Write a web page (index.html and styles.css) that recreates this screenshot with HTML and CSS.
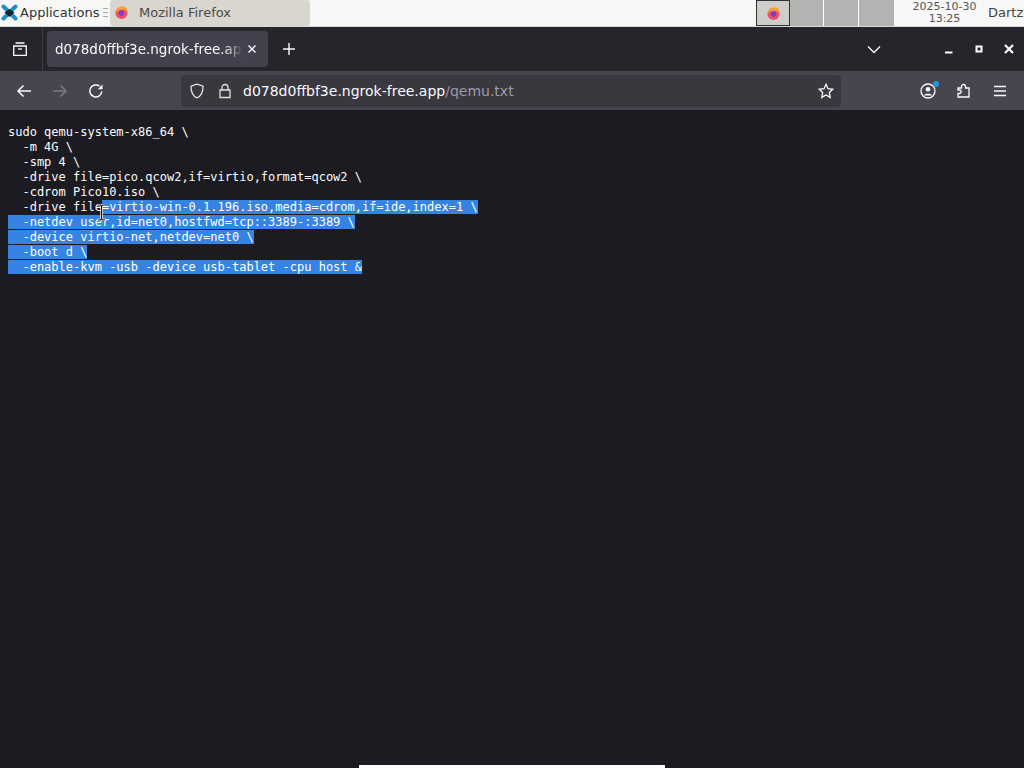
FILE: index.html
```html
<!DOCTYPE html>
<html lang="en">
<head>
<meta charset="utf-8">
<title>qemu.txt</title>
<link rel="stylesheet" href="styles.css">
</head>
<body>
<header class="panel">
  <div class="apps">
    <svg class="apps-icon" width="17" height="17" viewBox="0 0 17 17"><path d="M2.500 2.500l12 12M14.500 2.500l-12 12" stroke="#1f8fc4" stroke-width="4" stroke-linecap="round"/><path d="M3.500 8.500L8.500 5l5 3.500-5 4.500z" fill="#10202c"/></svg>
    <span class="apps-label">Applications</span>
    <svg class="sep" width="6" height="11" viewBox="0 0 6 11" stroke="#a8a8a4"><path d="M0 1.500h5M0 5.500h5M0 9.500h5"/></svg>
  </div>
  <div class="task">
    <svg class="fx" width="15" height="15" viewBox="0 0 16 16"><circle cx="8" cy="8.500" r="6.500" fill="#ee4f6b"/><path d="M1.700 7.500C2.500 3 6.500 1 10.500 1.800c3 .7 4.600 3.700 4 7.200-1-3-3-4-5-4-3 0-5 1-7.800 2.500z" fill="#fa9a36"/><circle cx="8" cy="8.500" r="3" fill="#7a3fc4"/></svg>
    <span>Mozilla Firefox</span>
  </div>
  <div class="spacer"></div>
  <div class="pager">
    <div class="desk active"><svg width="15" height="15" viewBox="0 0 16 16"><circle cx="8" cy="8.500" r="6.500" fill="#ee4f6b"/><path d="M1.700 7.500C2.500 3 6.500 1 10.500 1.800c3 .7 4.600 3.700 4 7.200-1-3-3-4-5-4-3 0-5 1-7.800 2.500z" fill="#fa9a36"/><circle cx="8" cy="8.500" r="3" fill="#7a3fc4"/></svg></div>
    <div class="desk"></div>
    <div class="desk"></div>
    <div class="desk"></div>
  </div>
  <div class="clock"><span>2025-10-30</span><span>13:25</span></div>
  <div class="user">Dartz</div>
</header>

<div class="tabbar">
  <button class="tb-btn view"><svg width="16" height="16" viewBox="0 0 16 16" fill="none" stroke="#fbfbfe" stroke-width="1.300"><path d="M3.500 2h9M1.700 5h12.600v9.300H1.700z"/><path d="M6 8h4"/></svg></button>
  <div class="tab">
    <span class="tab-title">d078d0ffbf3e.ngrok-free.app/qemu.txt</span>
    <svg class="tab-x" width="10" height="10" viewBox="0 0 10 10" stroke="#fbfbfe" stroke-width="1.400"><path d="M1.500 1.500l7 7M8.500 1.500l-7 7"/></svg>
  </div>
  <button class="tb-btn plus"><svg width="14" height="14" viewBox="0 0 14 14" stroke="#fbfbfe" stroke-width="1.400"><path d="M7 1v12M1 7h12"/></svg></button>
  <div class="spacer"></div>
  <svg class="chev" width="14" height="9" viewBox="0 0 14 9" fill="none" stroke="#fbfbfe" stroke-width="1.300"><path d="M1 1.500l6 6 6-6"/></svg>
  <div class="winctl">
    <svg width="10" height="10" viewBox="0 0 10 10"><path d="M1 7.500h7.500v2H1z" fill="#fff"/></svg>
    <svg width="10" height="10" viewBox="0 0 10 10" fill="none" stroke="#fff" stroke-width="2"><path d="M2.500 2.500h5v5h-5z"/></svg>
    <svg width="10" height="10" viewBox="0 0 10 10" stroke="#fff" stroke-width="2.200"><path d="M1 1l8 8M9 1l-8 8"/></svg>
  </div>
</div>

<nav class="navbar">
  <svg class="nav-icon" width="16" height="16" viewBox="0 0 16 16" fill="none" stroke="#fbfbfe" stroke-width="1.500"><path d="M15 8H2M7.500 2.500L2 8l5.500 5.500"/></svg>
  <svg class="nav-icon" width="16" height="16" viewBox="0 0 16 16" fill="none" stroke="#7b7a83" stroke-width="1.500"><path d="M1 8h13M8.500 2.500L14 8l-5.500 5.500"/></svg>
  <svg class="nav-icon" width="16" height="16" viewBox="0 0 16 16" fill="none" stroke="#fbfbfe" stroke-width="1.500"><path d="M13.800 8.500A6 6 0 1 1 11.500 3.200"/><path d="M14.500 1.500v4.700H9.800z" fill="#fbfbfe" stroke="none"/></svg>
  <div class="urlbar">
    <svg class="shield" width="16" height="16" viewBox="0 0 16 16" fill="none" stroke="#e0e0e6" stroke-width="1.300"><path d="M8 1.200l6 2c0 6-1.500 9.800-6 11.600C3.500 13 2 9.200 2 3.200z"/></svg>
    <svg class="lock" width="16" height="16" viewBox="0 0 16 16" fill="none" stroke="#e0e0e6" stroke-width="1.300"><path d="M3 7h10v7.500H3zM5 7V4.500a3 3 0 0 1 6 0V7"/></svg>
    <span class="url"><span class="host">d078d0ffbf3e.ngrok-free.app</span><span class="path">/qemu.txt</span></span>
    <div class="spacer"></div>
    <svg class="star" width="16" height="16" viewBox="0 0 16 16" fill="none" stroke="#fbfbfe" stroke-width="1.300"><path d="M8 1.300l2 4.400 4.800.6-3.500 3.300.9 4.800L8 12l-4.200 2.400.9-4.800L1.200 6.300 6 5.700z"/></svg>
  </div>
  <div class="nav-right">
    <div class="account">
      <svg width="16" height="16" viewBox="0 0 16 16" fill="none" stroke="#fbfbfe" stroke-width="1.300"><circle cx="8" cy="8" r="7"/><circle cx="8" cy="6.200" r="2.300" fill="#fbfbfe" stroke="none"/><path d="M3.800 12.500c1-2.200 7.400-2.200 8.400 0z" fill="#fbfbfe" stroke="none"/></svg>
      <span class="badge"></span>
    </div>
    <svg width="16" height="16" viewBox="0 0 16 16" fill="none" stroke="#fbfbfe" stroke-width="1.300"><path d="M2 5h3.500V3.500a2 2 0 0 1 4 0V5H13v9H2v-3.500h1.500a1.700 1.700 0 0 0 0-3.500H2z"/></svg>
    <svg width="16" height="16" viewBox="0 0 16 16" stroke="#fbfbfe" stroke-width="1.300"><path d="M2 3.500h12M2 8h12M2 12.500h12"/></svg>
  </div>
</nav>

<main class="content">
<pre class="doc">sudo qemu-system-x86_64 \
  -m 4G \
  -smp 4 \
  -drive file=pico.qcow2,if=virtio,format=qcow2 \
  -cdrom Pico10.iso \
  -drive file<mark>=virtio-win-0.1.196.iso,media=cdrom,if=ide,index=1 \
</mark><mark>  -netdev user,id=net0,hostfwd=tcp::3389-:3389 \
</mark><mark>  -device virtio-net,netdev=net0 \
</mark><mark>  -boot d \
</mark><mark>  -enable-kvm -usb -device usb-tablet -cpu host &amp;</mark></pre>
  <svg class="cursor" width="9" height="17" viewBox="0 0 9 17" fill="none"><path d="M1 1h2.500l1 1 1-1H8M4.500 2v13M1 16h2.500l1-1 1 1H8" stroke="#fff" stroke-width="2.600"/><path d="M1 1h2.500l1 1 1-1H8M4.500 2v13M1 16h2.500l1-1 1 1H8" stroke="#111" stroke-width="1.200"/></svg>
  <div class="scrollbar"></div>
</main>
</body>
</html>
```
FILE: styles.css
```css
html, body { margin: 0; padding: 0; height: 100%; overflow: hidden; }
body {
  width: 1024px; height: 768px;
  display: flex; flex-direction: column;
  font-family: "DejaVu Sans", sans-serif;
  background: #1c1b22;
}
button { background: none; border: 0; padding: 0; display: flex; }
svg { display: block; flex: none; }
.spacer { flex: 1; }

.panel {
  height: 27px; box-sizing: border-box; background: #f7f7f6; color: #2e3436;
  display: flex; align-items: stretch; font-size: 13px;
  border-bottom: 1px solid #d8d8d4;
  flex: none;
}
.apps { width: 110px; height: 25px; display: flex; align-items: center; gap: 2px; padding-left: 1px; box-sizing: border-box; white-space: nowrap; }
.sep { margin-left: 2px; }
.task {
  width: 200px; height: 26px; box-sizing: border-box;
  background: #d9d6cf; border-radius: 3px;
  display: flex; align-items: center; gap: 10px;
  padding: 0 0 2px 4px; color: #4a4a48; font-size: 13px;
}
.pager { display: grid; grid-template-columns: 34px 34px 35px 35px; height: 26px; flex: none; }
.desk { background: #b3b3b1; border-right: 1px solid #fff; box-sizing: border-box; display: flex; align-items: center; justify-content: center; }
.desk.active { background: #cfcdc9; border: 1px solid #2e3436; }
.desk:last-child { border-right: 0; }
.clock { width: 94px; box-sizing: border-box; flex: none; padding: 1px 0 0 7px; display: flex; flex-direction: column; align-items: center; font-size: 11px; line-height: 12px; color: #555; }
.user { width: 36px; flex: none; font-size: 13px; line-height: 25px; white-space: nowrap; color: #444; }

.tabbar {
  height: 44px; background: #26252c; flex: none;
  display: flex; align-items: center;
}
.tb-btn.view { width: 43px; height: 44px; justify-content: center; align-items: center; padding-right: 3px; border-right: 1px solid #3c3b44; box-sizing: border-box; margin-right: 4px; }
.tab {
  width: 221px; height: 36px; background: #42414d; border-radius: 4px;
  display: flex; align-items: center; box-sizing: border-box; padding: 0 11px 0 8px;
  color: #fbfbfe; font-size: 13.500px; gap: 4px;
}
.tab-title { flex: 1; overflow: hidden; white-space: nowrap; -webkit-mask-image: linear-gradient(to right, #000 90%, transparent); mask-image: linear-gradient(to right, #000 90%, transparent); }
.tb-btn.plus { margin-left: 14px; }
.chev { margin-right: 63px; }
.winctl { display: flex; gap: 20px; margin-right: 10px; }

.navbar {
  height: 40px; background: #47464f; flex: none; box-sizing: border-box;
  display: flex; align-items: center; padding-left: 16px;
  border-bottom: 1px solid #1c1b22;
}
.nav-icon { margin-right: 20px; }
.urlbar {
  width: 660px; height: 32px; margin-left: 57px; box-sizing: border-box;
  background: #39383f; border-radius: 4px;
  display: flex; align-items: center; padding: 0 7px 0 8px;
}
.shield { margin-right: 12px; }
.lock { margin-right: 10px; }
.url { font-size: 14px; white-space: nowrap; }
.host { color: #fbfbfe; }
.path { color: #9d9ca3; }
.nav-right { display: flex; gap: 20px; margin-left: 79px; align-items: center; }
.account { position: relative; }
.badge { position: absolute; top: -2px; right: -3px; width: 6px; height: 6px; border-radius: 50%; background: #1c9ad6; }

.content { flex: 1; position: relative; background: #1c1b22; overflow: hidden; }
.doc {
  margin: 0; padding: 14px 8px 0;
  font-family: "DejaVu Sans Mono", monospace;
  font-size: 12px; line-height: 15px; color: #fbfbfe;
}
mark { background: #3584e4; color: #fff; }
.cursor { position: absolute; left: 97px; top: 93px; }
.scrollbar { position: absolute; left: 359px; bottom: 0; width: 306px; height: 3px; background: #fff; }
```
